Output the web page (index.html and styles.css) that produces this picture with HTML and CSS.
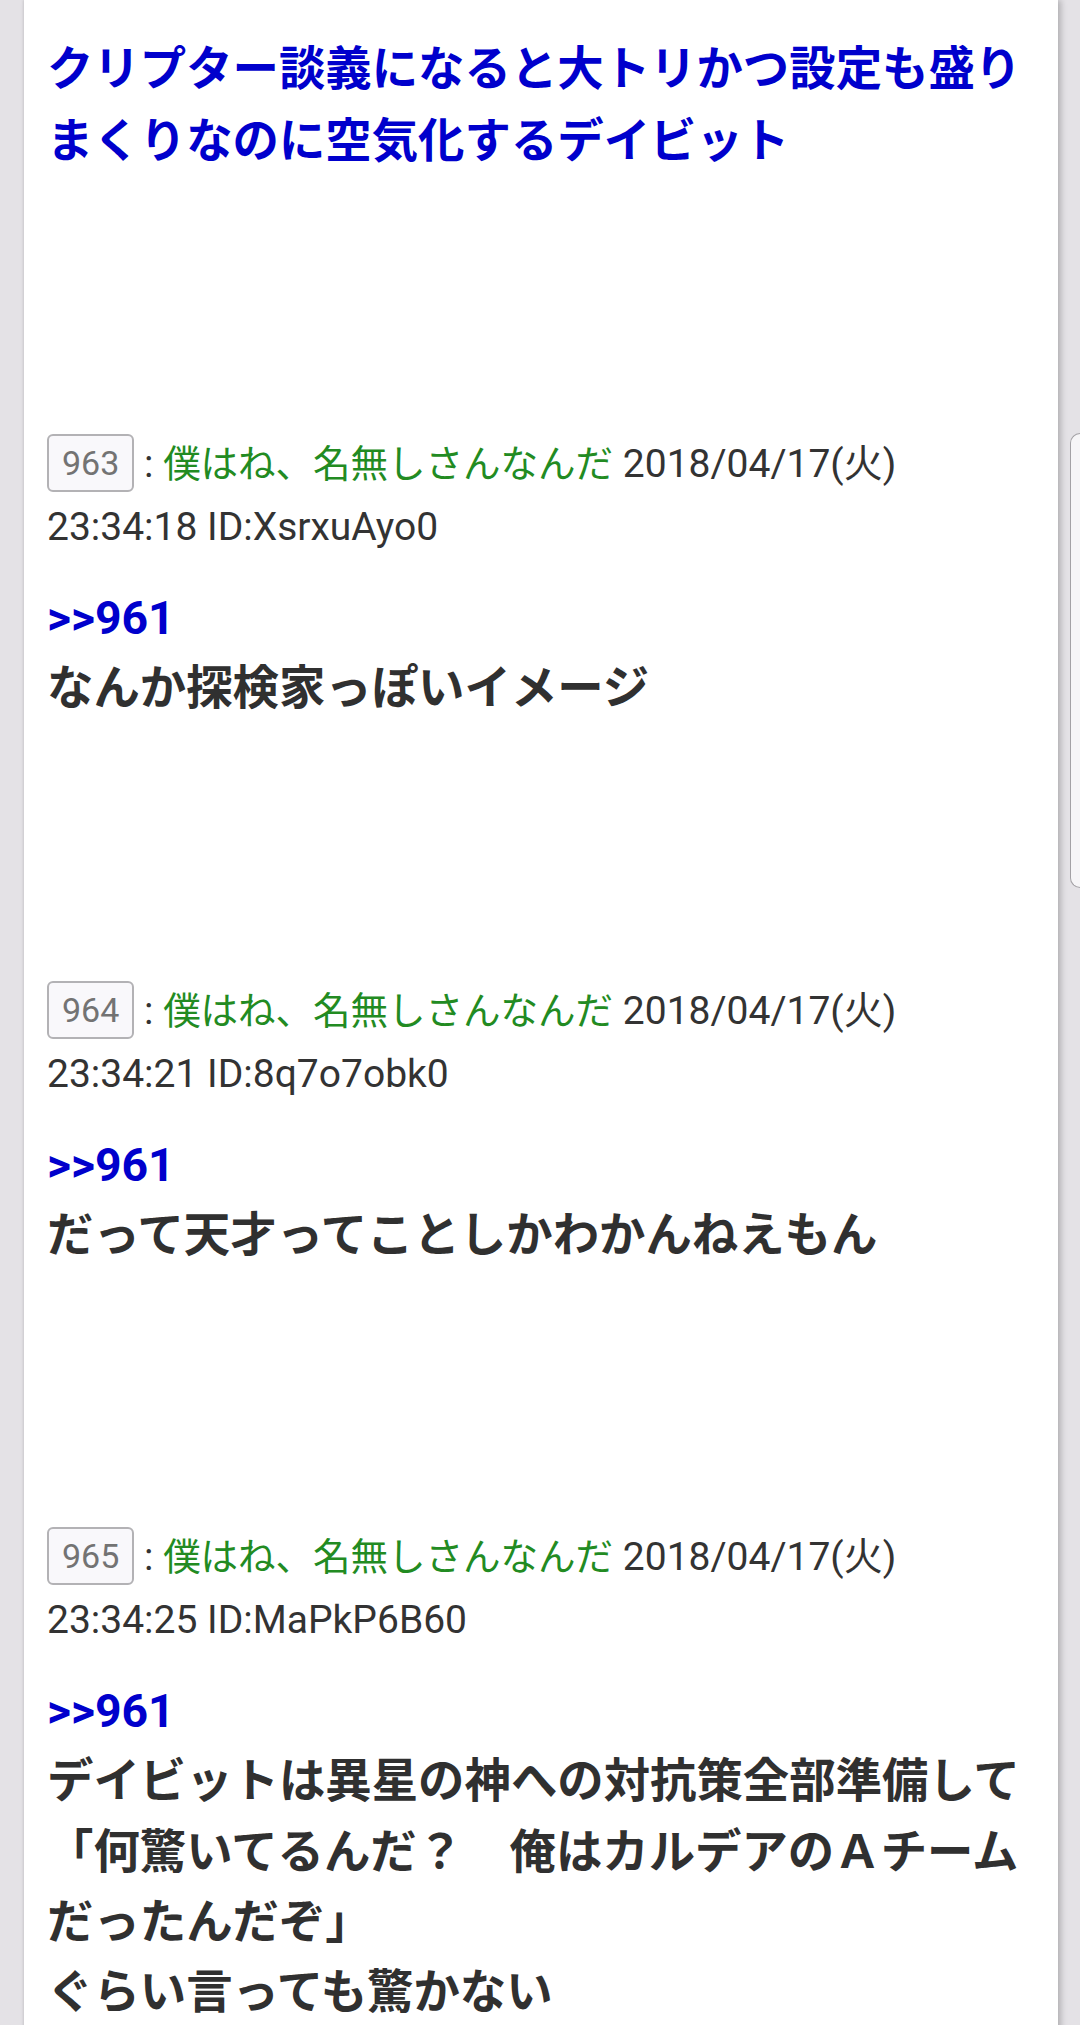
FILE: index.html
```html
<!DOCTYPE html>
<html lang="ja">
<head>
<meta charset="utf-8">
<title>クリプター談義</title>
<link rel="stylesheet" href="styles.css">
</head>
<body>
<div class="card">
  <h1 class="title">クリプター談義になると大トリかつ設定も盛りまくりなのに空気化するデイビット</h1>

  <div class="post">
    <div class="post-head"><span class="num">963</span> : <span class="name">僕はね、名無しさんなんだ</span> 2018/04/17(火) 23:34:18 ID:XsrxuAyo0</div>
    <div class="post-body"><span class="anchor">&gt;&gt;961</span><br>なんか探検家っぽいイメージ</div>
  </div>

  <div class="post">
    <div class="post-head"><span class="num">964</span> : <span class="name">僕はね、名無しさんなんだ</span> 2018/04/17(火) 23:34:21 ID:8q7o7obk0</div>
    <div class="post-body"><span class="anchor">&gt;&gt;961</span><br>だって天才ってことしかわかんねえもん</div>
  </div>

  <div class="post">
    <div class="post-head"><span class="num">965</span> : <span class="name">僕はね、名無しさんなんだ</span> 2018/04/17(火) 23:34:25 ID:MaPkP6B60</div>
    <div class="post-body"><span class="anchor">&gt;&gt;961</span><br>デイビットは異星の神への対抗策全部準備して<br>「何驚いてるんだ？　俺はカルデアのＡチームだったんだぞ」<br>ぐらい言っても驚かない</div>
  </div>
</div>
<div class="edge-handle"></div>
</body>
</html>
```

FILE: styles.css
```css
html, body {
  margin: 0;
  padding: 0;
}

body {
  background: #e4e2e6;
  font-family: Roboto, "Noto Sans CJK JP", sans-serif;
  overflow: hidden;
}

.card {
  margin-left: 24px;
  width: 1034px;
  min-height: 2100px;
  box-sizing: border-box;
  padding: 33px 22px 0 23px;
  background: #ffffff;
  box-shadow: 3px 0 6px rgba(0, 0, 0, 0.22), -1px 0 2px rgba(0, 0, 0, 0.08);
}

.title {
  margin: 0;
  font-size: 46.4px;
  line-height: 72px;
  font-weight: 700;
  color: #0000cc;
}

.post {
  margin-top: 256px;
}

.post-head {
  font-size: 39px;
  line-height: 63px;
  color: #333333;
}

.num {
  display: inline-block;
  height: 54px;
  line-height: 54px;
  padding: 0 13px;
  border: 2px solid #b3b2b5;
  border-radius: 6px;
  background: #f9f8fb;
  color: #737373;
  font-size: 34px;
  vertical-align: 2px;
}

.name {
  color: #228b22;
  font-size: 37.5px;
}

.post-body {
  margin-top: 24px;
  font-size: 46.4px;
  line-height: 70.3px;
  font-weight: 700;
  color: #303030;
}

.anchor {
  color: #0000cc;
}

.edge-handle {
  position: fixed;
  right: 0;
  top: 433px;
  width: 10px;
  height: 455px;
  box-sizing: border-box;
  border: 1px solid #a3a1a5;
  border-right: none;
  border-radius: 10px 0 0 10px;
  background: #f6f5f7;
}
```
